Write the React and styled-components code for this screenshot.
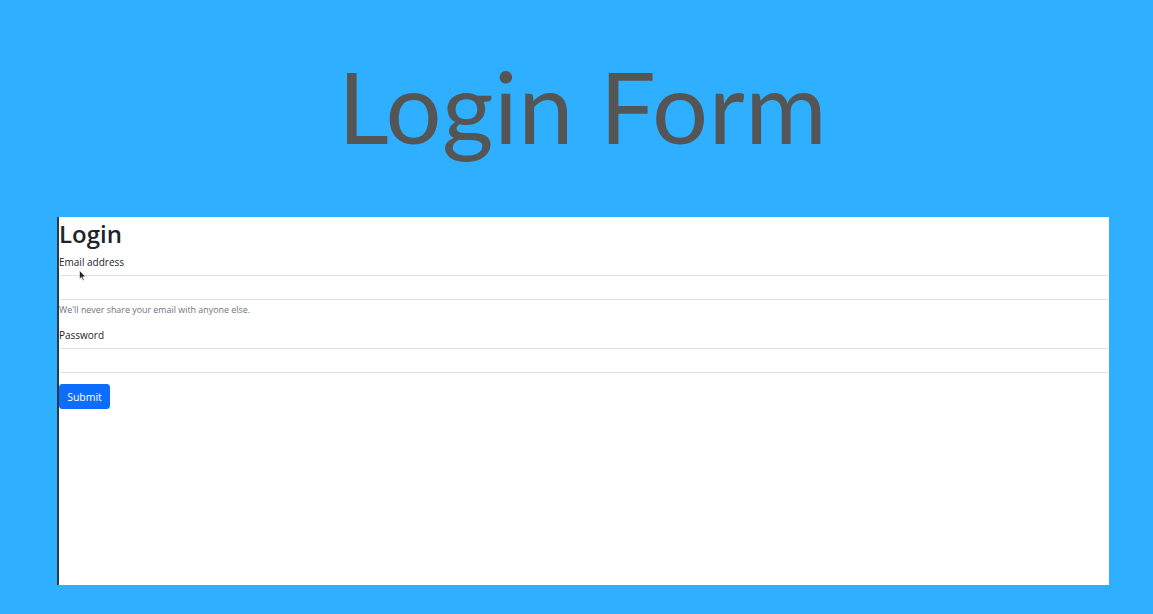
import React from "react";
import styled, { createGlobalStyle } from "styled-components";

const GlobalStyle = createGlobalStyle`
  html, body {
    margin: 0;
    padding: 0;
    background: #2eafff;
    height: 100%;
    overflow: hidden;
  }
`;

const Page = styled.div`
  width: 1153px;
  height: 614px;
  background: #2eafff;
  display: flex;
  flex-direction: column;
`;

const Title = styled.h1`
  margin: 0;
  padding-top: 50px;
  height: 217px;
  box-sizing: border-box;
  text-align: center;
  padding-left: 12px;
  font-family: "Lato", "Noto Sans", sans-serif;
  font-weight: 400;
  font-size: 99px;
  line-height: 112px;
  color: #555555;
  letter-spacing: 0.5px;
`;

const Panel = styled.div`
  position: relative;
  margin-left: 57px;
  width: 1052px;
  height: 368px;
  background: #ffffff;
  border-left: 2px solid #2b3a45;
  box-sizing: border-box;
  color: #212529;
`;

const Heading = styled.h2`
  margin: 0 0 4px;
  padding-top: 1px;
  font-family: "Open Sans", "DejaVu Sans", sans-serif;
  font-size: 24px;
  line-height: 31px;
  font-weight: 600;
  color: #212529;
`;

const Field = styled.div`
  display: flex;
  flex-direction: column;
`;

const Label = styled.label`
  font-family: "Open Sans", sans-serif;
  font-size: 10px;
  line-height: 14px;
  margin: 2px 0 6px;
  color: #212529;
`;

const Input = styled.input`
  display: block;
  width: 100%;
  height: 25px;
  box-sizing: border-box;
  border: none;
  border-top: 1px solid #dee2e6;
  border-bottom: 1px solid #dee2e6;
  background: #fff;
  outline: none;
  padding: 0;
`;

const Help = styled.small`
  font-family: "Open Sans", sans-serif;
  font-size: 8.9px;
  line-height: 11px;
  color: #6c757d;
  margin-top: 4px;
  margin-bottom: 11px;
`;

const Button = styled.button`
  margin-top: 11px;
  width: 51px;
  height: 25px;
  background: #0d6efd;
  color: #ffffff;
  border: 1px solid #0d6efd;
  border-radius: 3px;
  font-family: "Open Sans", sans-serif;
  font-size: 10.5px;
  padding: 0;
  cursor: pointer;
`;

const Cursor = styled.svg`
  position: absolute;
  left: 20px;
  top: 53px;
`;

export default function App() {
  return (
    <Page>
      <GlobalStyle />
      <Title>Login Form</Title>
      <Panel>
        <Heading>Login</Heading>
        <Field>
          <Label>Email address</Label>
          <Input type="email" />
          <Help>We'll never share your email with anyone else.</Help>
        </Field>
        <Field>
          <Label>Password</Label>
          <Input type="password" />
        </Field>
        <Button>Submit</Button>
        <Cursor width="8" height="12" viewBox="0 0 8 12">
          <path d="M0.5 0.5 L0.5 9 L2.5 7.2 L4 10.5 L5.2 10 L3.8 6.8 L6.5 6.8 Z" fill="#222" stroke="#fff" strokeWidth="0.6" />
        </Cursor>
      </Panel>
    </Page>
  );
}
